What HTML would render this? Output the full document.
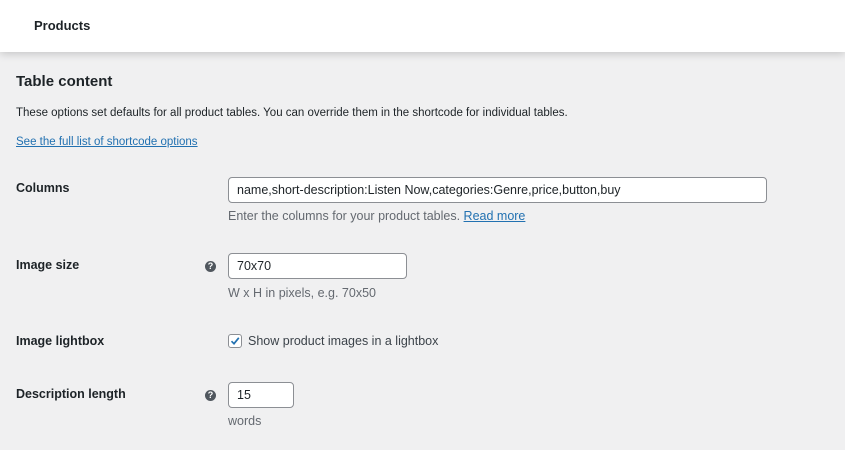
<html><head><style>
body{margin:0;width:845px;height:450px;background:#f0f0f1;font-family:"Liberation Sans",sans-serif;color:#1d2327;position:relative;overflow:hidden;font-size:12px}
.a{position:absolute;white-space:nowrap}
.hdr{position:absolute;left:0;top:0;width:845px;height:52px;background:#fff;box-shadow:0 2px 8px rgba(0,0,0,.18)}
.lbl{font-weight:bold;font-size:12.5px}
.in{position:absolute;background:#fff;border:1px solid #8c8f94;border-radius:4px;box-sizing:border-box;font-size:12.5px;padding:0 8px;line-height:24px}
.hint{color:#646970;font-size:12.5px}
.q{position:absolute;width:11px;height:11px;border-radius:50%;background:#50575e;color:#fff;font-size:9px;font-weight:bold;text-align:center;line-height:11px}
a{color:#2271b1}
</style></head><body>
<div class="hdr"></div>
<div class="a" style="left:34px;top:18px;font-size:13px;font-weight:bold">Products</div>
<div class="a" style="left:16px;top:73px;font-size:15px;font-weight:bold">Table content</div>
<div class="a" style="left:16px;top:107px;font-size:11.5px">These options set defaults for all product tables. You can override them in the shortcode for individual tables.</div>
<div class="a" style="left:16px;top:136px;font-size:11.5px"><a href="#">See the full list of shortcode options</a></div>

<div class="a lbl" style="left:16px;top:181px">Columns</div>
<div class="in" style="left:228px;top:177px;width:539px;height:26px">name,short-description:Listen Now,categories:Genre,price,button,buy</div>
<div class="a hint" style="left:228px;top:209px">Enter the columns for your product tables. <a href="#">Read more</a></div>

<div class="a lbl" style="left:16px;top:258px">Image size</div>
<div class="q" style="left:205px;top:261px">?</div>
<div class="in" style="left:228px;top:253px;width:179px;height:26px">70x70</div>
<div class="a hint" style="left:228px;top:286px">W x H in pixels, e.g. 70x50</div>

<div class="a lbl" style="left:16px;top:334px">Image lightbox</div>
<div style="position:absolute;left:228px;top:334px;width:14px;height:14px;border:1px solid #8c8f94;border-radius:3px;background:#fff;box-sizing:border-box"><svg width="12" height="12" viewBox="0 0 12 12" style="position:absolute;left:0;top:0"><path d="M2.5 6.2 L5 8.7 L9.8 2.8" stroke="#2271b1" stroke-width="1.7" fill="none"/></svg></div>
<div class="a" style="left:248px;top:334px;font-size:12.5px;color:#3c434a">Show product images in a lightbox</div>

<div class="a lbl" style="left:16px;top:387px">Description length</div>
<div class="q" style="left:205px;top:390px">?</div>
<div class="in" style="left:228px;top:382px;width:66px;height:26px">15</div>
<div class="a hint" style="left:228px;top:414px">words</div>
</body></html>
